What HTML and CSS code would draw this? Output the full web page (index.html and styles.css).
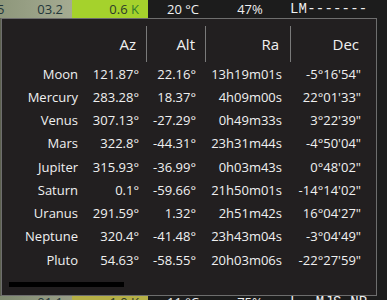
FILE: index.html
```html
<!DOCTYPE html>
<html>
<head>
<meta charset="utf-8">
<link rel="stylesheet" href="styles.css">
</head>
<body>
<div class="bar top">
  <div class="cell c1"><span class="cut">5</span><span>03.2</span></div>
  <div class="cell c2"><span>0.6 <b class="k">K</b></span></div>
  <div class="cell c3">20 °C</div>
  <div class="cell c4">47%</div>
  <div class="cell c5 mono">LM-------</div>
</div>
<div class="main">
  <div class="edge"></div>
  <div class="box">
    <div class="head">
      <div class="h"></div>
      <div class="h sep">Az</div>
      <div class="h sep">Alt</div>
      <div class="h sep">Ra</div>
      <div class="h last">Dec</div>
    </div>
    <div class="rows">
      <div>Moon</div><div>121.87°</div><div>22.16°</div><div>13h19m01s</div><div>-5°16'54"</div>
      <div>Mercury</div><div>283.28°</div><div>18.37°</div><div>4h09m00s</div><div>22°01'33"</div>
      <div>Venus</div><div>307.13°</div><div>-27.29°</div><div>0h49m33s</div><div>3°22'39"</div>
      <div>Mars</div><div>322.8°</div><div>-44.31°</div><div>23h31m44s</div><div>-4°50'04"</div>
      <div>Jupiter</div><div>315.93°</div><div>-36.99°</div><div>0h03m43s</div><div>0°48'02"</div>
      <div>Saturn</div><div>0.1°</div><div>-59.66°</div><div>21h50m01s</div><div>-14°14'02"</div>
      <div>Uranus</div><div>291.59°</div><div>1.32°</div><div>2h51m42s</div><div>16°04'27"</div>
      <div>Neptune</div><div>320.4°</div><div>-41.48°</div><div>23h43m04s</div><div>-3°04'49"</div>
      <div>Pluto</div><div>54.63°</div><div>-58.55°</div><div>20h03m06s</div><div>-22°27'59"</div>
    </div>
    <div class="scroll"></div>
  </div>
</div>
<div class="bar bottom">
  <div class="cell c1 b1"><span>01.1</span></div>
  <div class="cell c2 b2"><span>1.0 K</span></div>
  <div class="cell c3"><span>11 °C</span></div>
  <div class="cell c4"><span>75%</span></div>
  <div class="cell c5 mono"><span>L--MJS-NP</span></div>
</div>
</body>
</html>
```
FILE: styles.css
```css
html, body {
  margin: 0;
  padding: 0;
}
body {
  width: 387px;
  height: 300px;
  overflow: hidden;
  background: #1c1c1c;
  font-family: "Open Sans", "Noto Sans", sans-serif;
  color: #f0f0f0;
}
.bar {
  display: flex;
  overflow: hidden;
  font-size: 13px;
}
.top {
  height: 18px;
  line-height: 19px;
}
.bottom {
  height: 4px;
}
.bottom .cell span {
  display: block;
  margin-top: -1px;
  line-height: 14px;
}
.cell {
  flex: none;
  white-space: nowrap;
}
.c1 {
  width: 72px;
  background: linear-gradient(90deg, #8e977b, #a5ab92);
  color: #23363a;
  display: flex;
  justify-content: space-between;
  padding-right: 9px;
  box-sizing: border-box;
}
.cut {
  margin-left: -3px;
}
.c2 {
  width: 76px;
  background: #a5d22c;
  color: #2d3a2a;
  text-align: right;
  padding-right: 9px;
  box-sizing: border-box;
}
.k {
  font-weight: normal;
  color: #2f7d2b;
}
.c3 {
  width: 70px;
  text-align: center;
}
.c4 {
  width: 64px;
  text-align: center;
}
.c5 {
  padding-left: 8px;
}
.mono {
  font-family: "Liberation Mono", "DejaVu Sans Mono", monospace;
  font-size: 14px;
  letter-spacing: 0.2px;
}
.b1 {
  background: linear-gradient(90deg, #7f8a70, #9aa088);
  justify-content: flex-end;
}
.b2 {
  background: #b6b046;
}
.main {
  display: flex;
  height: 278px;
}
.edge {
  width: 1px;
  background: #5d6150;
}
.box {
  width: 376px;
  height: 278px;
  box-sizing: border-box;
  border: 1px solid #6e6e6e;
  background: #221f20;
  padding-top: 7px;
}
.head {
  display: grid;
  grid-template-columns: 80px 65px 59px 85px 85px;
  height: 36px;
  font-size: 15px;
}
.h {
  display: flex;
  align-items: center;
  justify-content: flex-end;
  padding-right: 10px;
}
.h.sep {
  border-right: 1px solid #7a7a7a;
}
.h:nth-child(4) {
  padding-right: 11px;
}
.h.last {
  padding-right: 17px;
}
.rows {
  display: grid;
  grid-template-columns: 76px 61px 57px 86px 79px;
  grid-auto-rows: 23.25px;
  align-items: center;
  font-size: 13px;
  text-align: right;
  white-space: nowrap;
}
.scroll {
  margin: 11px 0 0 7px;
  width: 115px;
  height: 5px;
  background: #000;
}
```
